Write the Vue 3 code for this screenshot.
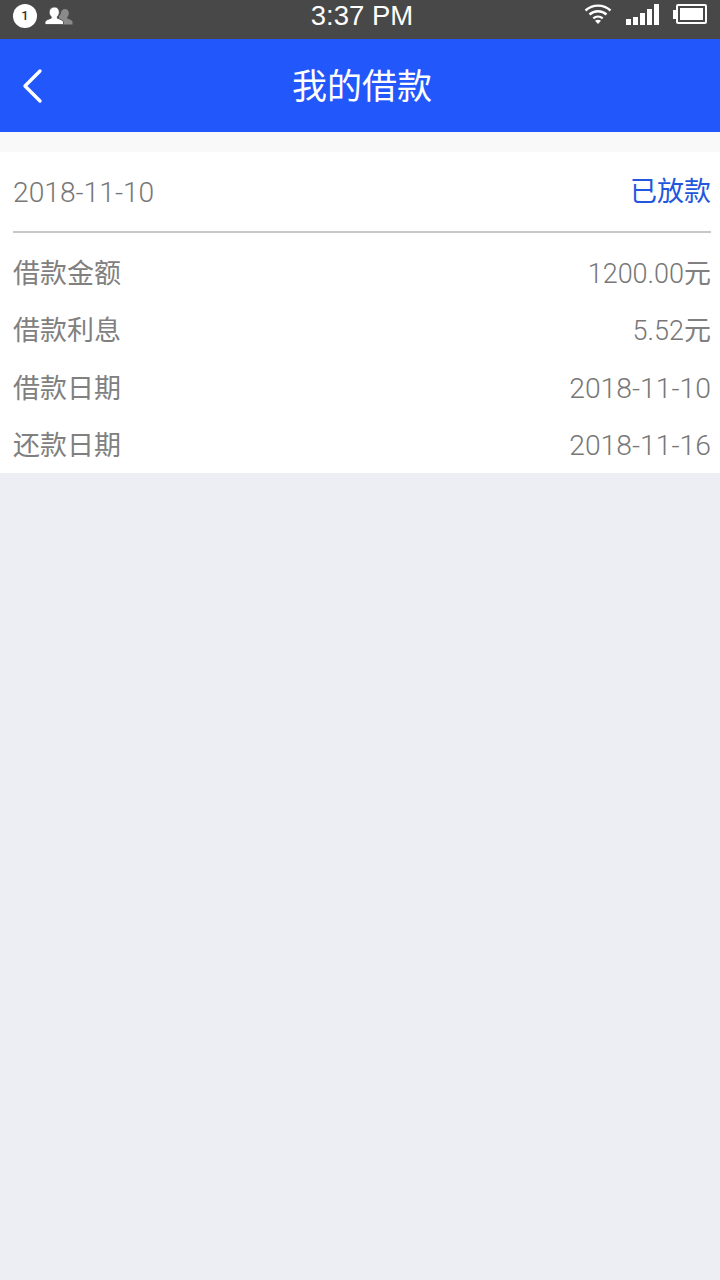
<script setup>
const rows = [
  { label: '借款金额', value: '1200.00', unit: '元' },
  { label: '借款利息', value: '5.52', unit: '元' },
  { label: '借款日期', value: '2018-11-10', unit: '' },
  { label: '还款日期', value: '2018-11-16', unit: '' }
]
</script>

<template>
  <div class="page">
    <div class="statusbar">
      <div class="status-left">
        <span class="badge">1</span>
        <svg class="contacts" width="28" height="18" viewBox="0 0 28 18">
          <path fill="#8a8a8a" d="M20 2c2.400 0 3.800 1.800 3.800 4.200 0 1.700-.7 3-1.600 3.900v1.400c1.400.6 4.800 1.400 5.300 3.100v2.900H14V9c.6-.5 1.500-1.300 1.800-2.800C16 3.800 17.600 2 20 2z"/>
          <path fill="#fff" stroke="#484848" stroke-width=".8" d="M9.500 0c3 0 4.800 2.200 4.800 5 0 2.100-.8 3.700-2 4.700v1.500c2 .8 5.800 1.700 6.200 3.800v2.500H0V15c.4-2.100 4.200-3 6.200-3.800V9.700C5 8.700 4.200 7.100 4.200 5c0-2.800 2.300-5 5.300-5z"/>
        </svg>
      </div>
      <span class="clock">3:37 PM</span>
      <div class="status-right">
        <svg width="28" height="22" viewBox="0 0 28 22" fill="none" stroke="#fff" stroke-width="2.400">
          <path d="M1.500 7.500c7-6.500 18-6.500 25 0"/>
          <path d="M5.500 11.500c4.800-4.300 12.200-4.300 17 0"/>
          <path d="M9.300 15.300c2.700-2.300 6.700-2.300 9.400 0"/>
          <path fill="#fff" stroke="none" d="M14 21l-3-3.200c1.700-1.300 4.300-1.300 6 0z"/>
        </svg>
        <div class="signal">
          <i class="b1"></i>
          <i class="b2"></i>
          <i class="b3"></i>
          <i class="b4"></i>
          <i class="b5"></i>
        </div>
        <div class="battery">
          <span class="battery-tip"></span>
          <span class="battery-body"><span class="battery-fill"></span></span>
        </div>
      </div>
    </div>

    <header class="navbar">
      <svg class="back" width="24" height="36" viewBox="0 0 24 36" fill="none">
        <path d="M20 3L5 18l15 15" stroke="#fff" stroke-width="3.400" stroke-linecap="round" stroke-linejoin="round"/>
      </svg>
      <h1>我的借款</h1>
    </header>

    <div class="band">
      <main class="card">
        <div class="card-head">
          <span class="date">2018-11-10</span>
          <span class="state">已放款</span>
        </div>
        <div class="rows">
          <div v-for="row in rows" :key="row.label" class="row">
            <span class="label">{{ row.label }}</span>
            <span class="value" :class="{ 'value-date': !row.unit }">{{ row.value }}<span class="unit">{{ row.unit }}</span></span>
          </div>
        </div>
      </main>
    </div>
  </div>
</template>

<style scoped>
.page {
  min-height: 1280px;
  background: #edeef3;
  font-family: Roboto, "Noto Sans CJK SC", sans-serif;
  font-weight: 300;
  color: #777;
}

.statusbar {
  position: relative;
  height: 39px;
  background: #484848;
  display: flex;
  justify-content: space-between;
  align-items: flex-start;
  padding: 3px 13px 0 13px;
  box-sizing: border-box;
}

.status-left {
  display: flex;
  align-items: center;
  gap: 8px;
  padding-top: 1px;
}

.badge {
  width: 24px;
  height: 24px;
  border-radius: 50%;
  background: #fff;
  color: #333;
  font-size: 13px;
  font-weight: 500;
  line-height: 24px;
  text-align: center;
}

.clock {
  position: absolute;
  left: 4px;
  right: 0;
  top: 0;
  text-align: center;
  color: #fff;
  font-family: "Liberation Sans", sans-serif;
  font-weight: 400;
  font-size: 27.500px;
  line-height: 32px;
}

.status-right {
  display: flex;
  align-items: center;
  gap: 14px;
}

.signal {
  display: flex;
  align-items: flex-end;
  gap: 2px;
  height: 21px;
}

.signal i {
  display: block;
  width: 5px;
  background: #fff;
}

.signal .b1 { height: 6px; }
.signal .b2 { height: 8px; }
.signal .b3 { height: 12px; }
.signal .b4 { height: 16px; }
.signal .b5 { height: 21px; }

.battery {
  display: flex;
  align-items: center;
}

.battery-tip {
  width: 3px;
  height: 9px;
  background: #fff;
}

.battery-body {
  width: 31px;
  height: 20px;
  border: 2px solid #fff;
  border-radius: 2px;
  padding: 2px;
  box-sizing: border-box;
  display: block;
}

.battery-fill {
  display: block;
  height: 100%;
  background: #fff;
}

.navbar {
  position: relative;
  height: 93px;
  background: #2257fb;
  display: flex;
  align-items: center;
  justify-content: center;
  padding-left: 4px;
  padding-bottom: 3px;
  box-sizing: border-box;
}

.navbar h1 {
  margin: 0;
  color: #fff;
  font-family: "Noto Sans CJK SC", sans-serif;
  font-size: 35px;
  line-height: 44px;
  font-weight: 400;
}

.back {
  position: absolute;
  left: 20px;
  top: 29px;
}

.band {
  padding-top: 20px;
  background: #f9f9fa;
}

.card {
  background: #fff;
  padding: 0 9px 0 13px;
}

.card-head {
  height: 79px;
  border-bottom: 2px solid #c8c8c8;
  display: flex;
  justify-content: space-between;
  align-items: center;
  font-size: 28.200px;
  line-height: 36px;
}

.date {
  padding-top: 3px;
}

.state {
  color: #2257dd;
  font-size: 27px;
  font-weight: 400;
}

.rows {
  padding: 12px 0 0;
  height: 240px;
  box-sizing: border-box;
}

.row {
  height: 57.500px;
  display: flex;
  justify-content: space-between;
  align-items: center;
  font-size: 27px;
  line-height: 36px;
}

.label,
.unit {
  font-weight: 400;
  color: #808080;
}

.value-date {
  font-size: 28.300px;
}

.date,
.value,
.label {
  white-space: nowrap;
}
</style>

<style>
body {
  background: #edeef3;
}
</style>
